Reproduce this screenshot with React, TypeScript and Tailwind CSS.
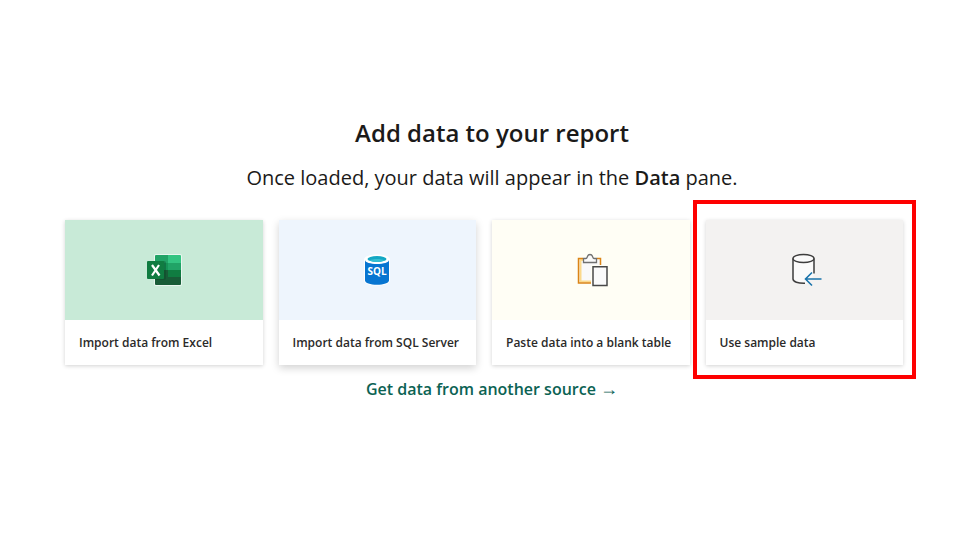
import React from 'react';

const ExcelIcon: React.FC = () => (
  <svg width="36" height="32" viewBox="0 0 36 32" aria-hidden="true">
    <rect x="8" y="0" width="28" height="32" rx="2" fill="#e9f6ef" />
    <path d="M10 1h12v8H9V2a1 1 0 0 1 1-1z" fill="#21a366" />
    <path d="M22 1h12a1 1 0 0 1 1 1v7H22z" fill="#33c481" />
    <path d="M9 9h13v7H9z" fill="#159456" />
    <path d="M22 9h13v7H22z" fill="#21a366" />
    <path d="M9 16h13v7H9z" fill="#185c37" />
    <path d="M22 16h13v7H22z" fill="#107c41" />
    <path d="M9 23h26v7a1 1 0 0 1-1 1H10a1 1 0 0 1-1-1z" fill="#185c37" />
    <path d="M9 7h9a2 2 0 0 1 2 2v15a2 2 0 0 1-2 2H9z" fill="#0b3f25" opacity="0.35" />
    <rect x="1" y="7" width="17" height="18" rx="1" fill="#107c41" />
    <path d="M6 11l7.500 10.500M13 11L6 21.500" stroke="#fff" strokeWidth="2.200" fill="none" />
  </svg>
);

const SqlIcon: React.FC = () => (
  <svg width="26" height="32" viewBox="0 0 26 32" aria-hidden="true">
    <path d="M0 5.500C0 2.500 6 .5 13 .5s13 2 13 5v21c0 3-6 5-13 5s-13-2-13-5z" fill="#fff" />
    <path d="M1 6v20.500c0 2.400 5.400 4.300 12 4.300s12-1.900 12-4.300V6c0 2.400-5.400 4-12 4S1 8.400 1 6z" fill="#0775d1" />
    <ellipse cx="13" cy="5" rx="9.500" ry="3" fill="#13a7c4" />
    <path d="M5.500 6.600c1.500-1 4.300-1.500 7.500-1.500s6 .5 7.500 1.500c-1.700.9-4.400 1.400-7.500 1.400s-5.800-.5-7.500-1.400z" fill="#35bfd2" />
    <text
      x="13"
      y="21"
      textAnchor="middle"
      fill="#fff"
      className="font-['Open_Sans',sans-serif] text-[10px] font-bold"
    >
      SQL
    </text>
  </svg>
);

const PasteIcon: React.FC = () => (
  <svg width="36" height="34" viewBox="-4 0 36 34" fill="none" aria-hidden="true">
    <path d="M2 6h22v25H2z" fill="#f9f9f9" />
    <path d="M7 7H3.500v21.500H14" stroke="#fbd98c" strokeWidth="2" />
    <path d="M6 5.500H1.500v24.500H14M20 5.500h3.500V12" stroke="#db8416" strokeWidth="1.500" />
    <path
      d="M6.500 9.500v-4H9c.8 0 1-.7 1.300-1.600C10.700 2.200 11.600 1.500 13 1.500s2.300.7 2.700 2.400c.3.900.5 1.600 1.300 1.600h2.500v4z"
      fill="#fafafa"
      stroke="#707070"
      strokeWidth="1.300"
    />
    <path d="M14 12h18v22H14z" fill="#fffef4" />
    <path d="M16 13.800h14v18.700H16z" fill="#fafafa" stroke="#484848" strokeWidth="1.500" />
  </svg>
);

const SampleIcon: React.FC = () => (
  <svg width="36" height="34" viewBox="-6 0 36 34" fill="none" aria-hidden="true">
    <path d="M1 5.500C1 3 6 1.500 11.500 1.500S22 3 22 5.500V22l-7 8.500c-7 .8-14-.5-14-3.500z" fill="#fafafa" />
    <path d="M22 20.500v-15c0-2.300-4.700-4-10.500-4S1 3.200 1 5.500V26c0 2.600 5 4.500 12 4.300" stroke="#3d3d3d" strokeWidth="1.500" />
    <path d="M1 5.500c0 2.200 4.700 4 10.500 4S22 7.700 22 5.500" stroke="#3d3d3d" strokeWidth="1.300" />
    <path d="M29.500 26H13.500M20 19.500L13.500 26l6.500 6.500" stroke="#1a74ab" strokeWidth="1.600" />
  </svg>
);

const cards = [
  { title: 'Import data from Excel', icon: <ExcelIcon />, bg: 'bg-[#c8ead7]', shadow: 'shadow-[0_1px_4px_rgba(0,0,0,0.18)]' },
  { title: 'Import data from SQL Server', icon: <SqlIcon />, bg: 'bg-[#eef5fd]', shadow: 'shadow-[0_3px_8px_rgba(0,0,0,0.18)]' },
  { title: 'Paste data into a blank table', icon: <PasteIcon />, bg: 'bg-[#fffef5]', shadow: 'shadow-[0_1px_4px_rgba(0,0,0,0.18)]' },
  { title: 'Use sample data', icon: <SampleIcon />, bg: 'bg-[#f3f2f1]', shadow: 'shadow-[0_1px_4px_rgba(0,0,0,0.18)]', highlighted: true },
];

const App: React.FC = () => {
  return (
    <main className="min-h-screen bg-white pt-28 pl-1 font-['Open_Sans',sans-serif] text-[#1b1a19]">
      <div className="mx-auto flex max-w-[854px] flex-col items-center">
        <h1 className="text-2xl leading-[42px] font-semibold">Add data to your report</h1>
        <p className="mt-1.5 text-xl leading-9">
          Once loaded, your data will appear in the <span className="font-semibold">Data</span> pane.
        </p>

        <div className="mt-6 grid w-full grid-cols-4 gap-4 pr-4">
          {cards.map((card) => (
            <div key={card.title} className="relative">
              <button type="button" className={`block w-full bg-white text-left ${card.shadow}`}>
                <span className={`flex h-25 items-center justify-center ${card.bg}`}>{card.icon}</span>
                <span className="block px-3.5 pt-[13px] pb-3 text-xs leading-5 font-semibold whitespace-nowrap text-[#2b2a29]">
                  {card.title}
                </span>
              </button>
              {card.highlighted && (
                <div className="pointer-events-none absolute -inset-x-[13px] -top-5 -bottom-3.5 border-4 border-[#fe0000]" />
              )}
            </div>
          ))}
        </div>

        <a href="#" className="mt-3 text-base leading-6 font-semibold text-[#0b6253]">
          Get data from another source{' '}
          <span className="font-['Liberation_Sans',sans-serif] text-lg leading-6 font-normal">→</span>
        </a>
      </div>
    </main>
  );
};

export default App;
